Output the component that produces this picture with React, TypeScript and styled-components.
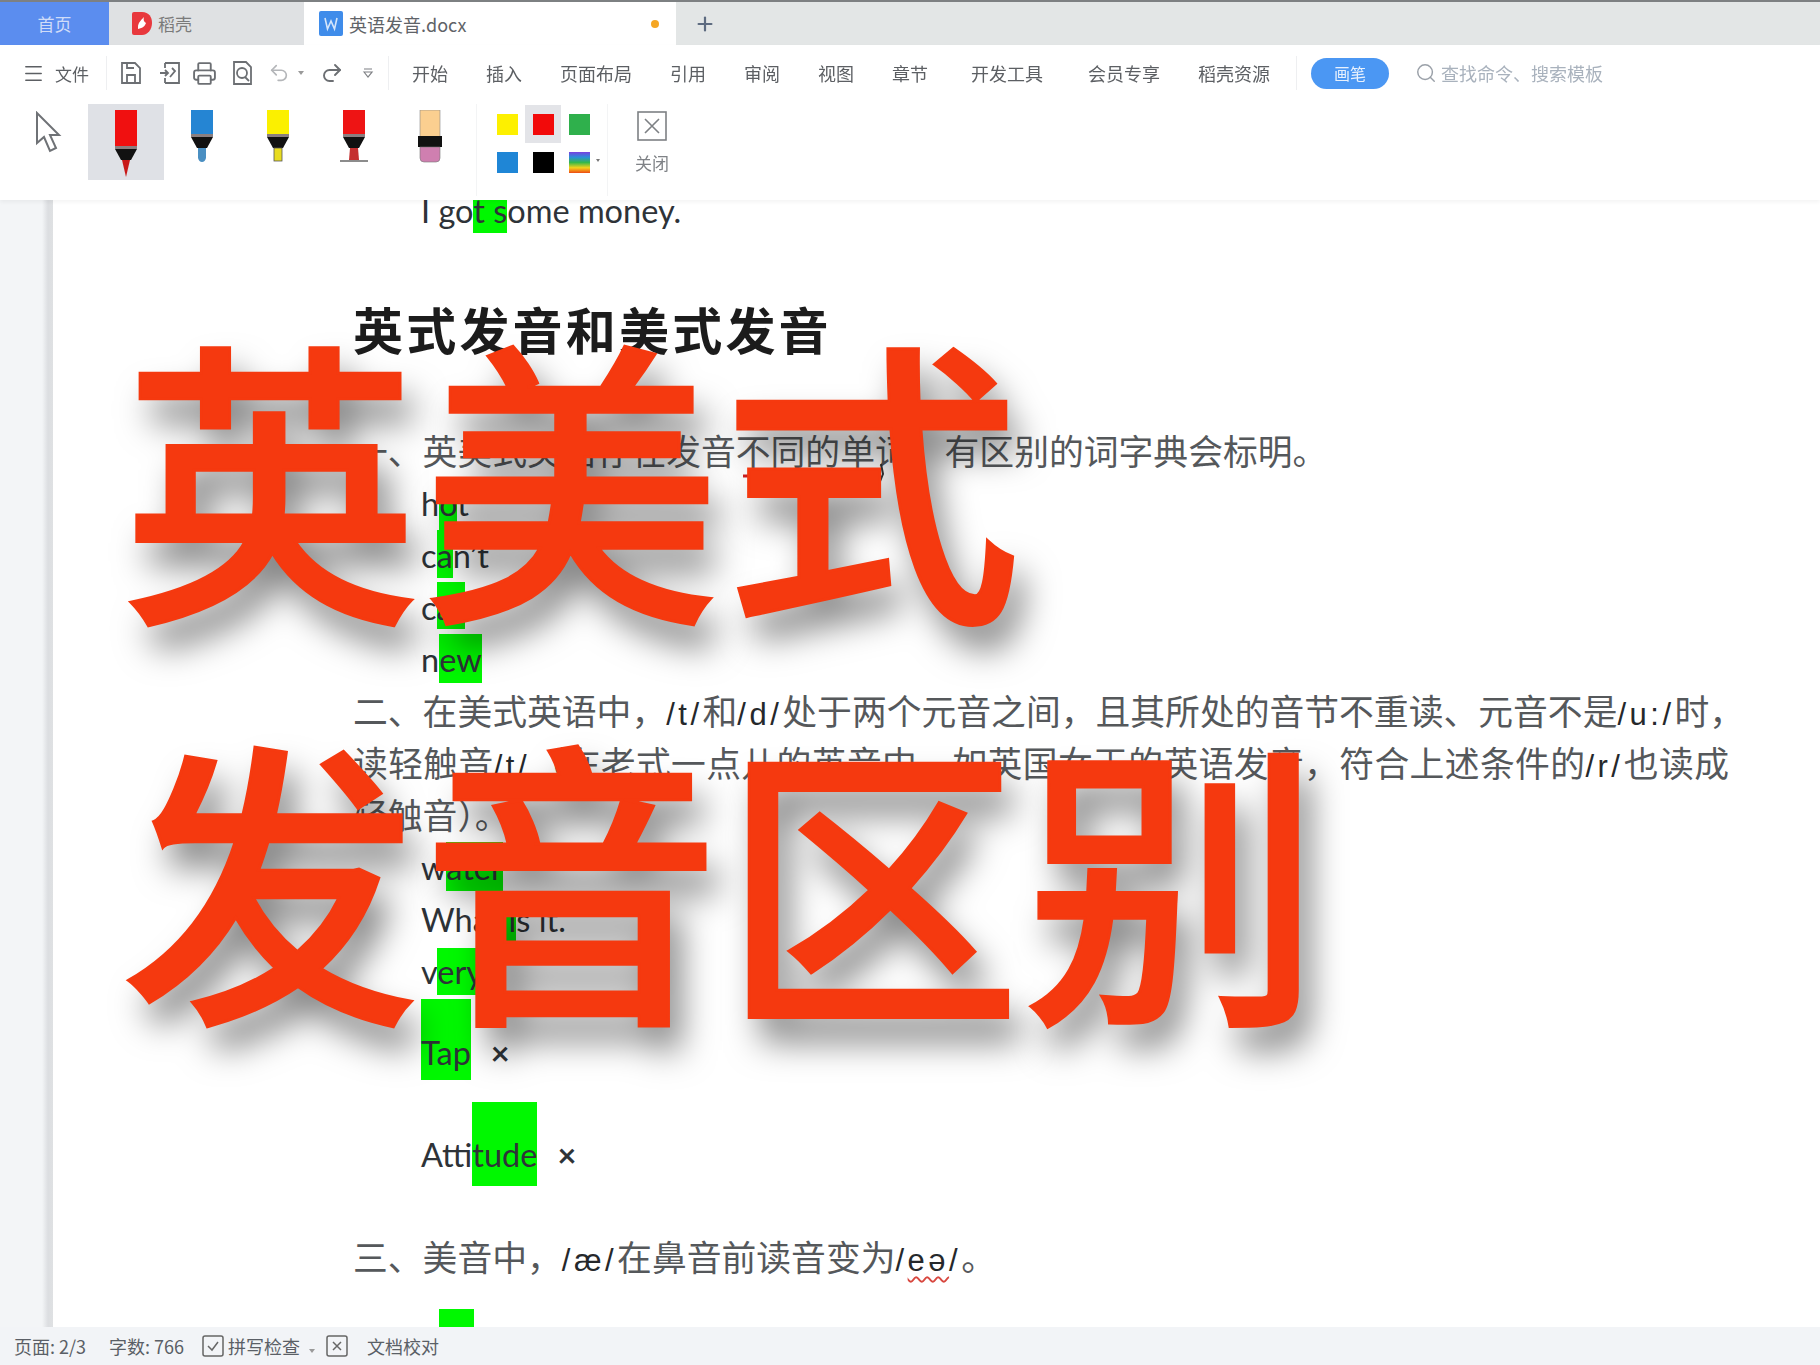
import { ReactNode } from "react";
import styled, { createGlobalStyle } from "styled-components";
import { Menu, Plus, Printer, Redo2, Search, Undo2 } from "lucide-react";

const CJK = `"Noto Sans CJK SC", "Liberation Sans", sans-serif`;
const GREEN = "#00f800";

const Global = createGlobalStyle`
    html, body {
        margin: 0;
        height: 100%;
        overflow: hidden;
        background: #fff;
    }
`;

const Window = styled.div`
    position: relative;
    width: 1820px;
    height: 1365px;
    display: grid;
    grid-template-rows: 45px 155px 1fr 38px;
    font-family: ${CJK};
    overflow: hidden;
    filter: blur(0.6px);
`;

/* tab strip */
const TabBar = styled.div`
    display: flex;
    align-items: stretch;
    background: #e3e6e6;
    border-top: 2px solid #7d8082;
`;

const HomeTab = styled.div`
    width: 109px;
    background: #5b8def;
    color: #cfdcf8;
    font-size: 17px;
    display: flex;
    align-items: center;
    justify-content: center;
`;

const ShellTab = styled.div`
    width: 195px;
    background: #dfe1e3;
    color: #7a7a7a;
    font-size: 17px;
    display: flex;
    align-items: center;
    gap: 4px;
    padding-left: 21px;
    box-sizing: border-box;
`;

const DocTab = styled.div`
    width: 372px;
    background: #fff;
    color: #5f6368;
    font-size: 18px;
    display: flex;
    align-items: center;
    gap: 6px;
    padding-left: 15px;
    box-sizing: border-box;
`;

const DocTabName = styled.span`
    flex: 1 1 auto;
`;

const Dot = styled.span`
    width: 8px;
    height: 8px;
    border-radius: 50%;
    background: #f5a623;
    margin-right: 17px;
`;

const AddTab = styled.div`
    margin-left: 18px;
    color: #5d6b80;
    display: flex;
    align-items: center;
`;

/* ribbon */
const Ribbon = styled.div`
    background: #fff;
    display: flex;
    flex-direction: column;
    box-shadow: 0 2px 4px rgba(0, 0, 0, 0.05);
    position: relative;
    z-index: 1;
`;

const MenuRow = styled.div`
    height: 56px;
    display: flex;
    align-items: center;
    color: #5c5f63;
    font-size: 18px;
    flex: 0 0 auto;
`;

const FileMenu = styled.div`
    display: flex;
    align-items: center;
    gap: 10px;
    padding-left: 22px;
    font-size: 17px;
    width: 84px;
`;

const Rule = styled.div<{ $left: number }>`
    width: 1px;
    height: 34px;
    background: #eeeff1;
    margin-left: ${(p) => p.$left}px;
`;

const IconSlot = styled.div<{ $w: number; $left?: number }>`
    width: ${(p) => p.$w}px;
    margin-left: ${(p) => p.$left ?? 0}px;
    display: flex;
    align-items: center;
    justify-content: center;
    color: #6c6f73;
`;

const Tabs = styled.div`
    display: flex;
    align-items: center;
    margin-left: 23px;
`;

const TabLabel = styled.div<{ $gap?: number }>`
    margin-left: ${(p) => p.$gap ?? 38}px;
    &:first-child {
        margin-left: 0;
    }
`;

const Pill = styled.div`
    width: 78px;
    height: 31px;
    margin-left: 14px;
    border-radius: 16px;
    background: #4b97f3;
    color: #e8f1fd;
    font-size: 16px;
    display: flex;
    align-items: center;
    justify-content: center;
`;

const SearchBox = styled.div`
    margin-left: 26px;
    display: flex;
    align-items: center;
    gap: 4px;
    color: #a9b2bd;
    font-size: 18px;
`;

const ToolRow = styled.div`
    display: flex;
    align-items: flex-start;
    padding-top: 3px;
`;

const CursorSlot = styled.div`
    width: 88px;
    padding: 7px 0 0 35px;
    box-sizing: border-box;
`;

const PenCell = styled.div<{ $active?: boolean }>`
    width: 76px;
    height: 76px;
    display: flex;
    justify-content: center;
    padding-top: 6px;
    box-sizing: border-box;
    background: ${(p) => (p.$active ? "#dfe1e6" : "transparent")};
`;

const Divider = styled.div<{ $left: number }>`
    width: 1px;
    height: 92px;
    background: #f3f4f5;
    margin-left: ${(p) => p.$left}px;
`;

const SwatchGrid = styled.div`
    display: grid;
    grid-template-columns: repeat(3, 36px);
    grid-auto-rows: 38px;
    margin: 1px 0 0 12px;
`;

const SwatchCell = styled.div<{ $active?: boolean }>`
    display: flex;
    align-items: center;
    justify-content: center;
    position: relative;
    background: ${(p) => (p.$active ? "#e3e4e8" : "transparent")};
`;

const Swatch = styled.div<{ $color: string }>`
    width: 21px;
    height: 21px;
    background: ${(p) => p.$color};
`;

const Caret = styled.span`
    position: absolute;
    right: -3px;
    top: 16px;
    width: 0;
    height: 0;
    border-left: 2.5px solid transparent;
    border-right: 2.5px solid transparent;
    border-top: 3px solid #777;
`;

const CloseTool = styled.div`
    margin-left: 28px;
    width: 32px;
    display: flex;
    flex-direction: column;
    align-items: center;
    gap: 9px;
    padding-top: 7px;
    color: #7f8286;
    font-size: 17px;
    white-space: nowrap;
`;

/* document */
const Viewport = styled.div`
    display: flex;
    overflow: hidden;
    background: #fff;
`;

const Gutter = styled.div`
    width: 53px;
    flex: 0 0 auto;
    background: linear-gradient(to right, #f3f5f7 0, #f3f5f7 42px, #dcdee1 48px, #dfe1e3 53px);
`;

const Page = styled.div`
    flex: 1 1 auto;
    background: #fff;
    padding-left: 300px;
    margin-top: -14px;
`;

const Line = styled.div<{ $gap?: number; $indent?: boolean }>`
    height: 52px;
    line-height: 52px;
    white-space: nowrap;
    margin-top: ${(p) => p.$gap ?? 0}px;
    padding-left: ${(p) => (p.$indent ? 68 : 0)}px;
`;

const Word = styled(Line)`
    font-family: Lato, "Liberation Sans", sans-serif;
    font-size: 32.5px;
    line-height: 49px;
    color: #2e3338;
`;

const Heading = styled.div`
    height: 70px;
    line-height: 70px;
    margin-top: 55px;
    font-size: 50px;
    font-weight: 700;
    color: #1c1c1c;
    letter-spacing: 3.2px;
    white-space: nowrap;
`;

const Body = styled(Line)<{ $fill?: boolean }>`
    font-family: "Liberation Sans", ${CJK};
    font-size: 34.8px;
    color: #55585b;
    width: ${(p) => (p.$fill ? "1376px" : "auto")};
    text-align-last: ${(p) => (p.$fill ? "justify" : "auto")};
`;

const Latin = styled.span`
    color: #25282b;
    font-size: 31px;
    letter-spacing: 3.5px;
`;

const Spelled = styled.span`
    text-decoration: underline wavy #d8473f 1.5px;
    text-underline-offset: 5px;
`;

const Mark = styled.span<{ $top: number; $bottom: number }>`
    background: ${GREEN};
    padding: ${(p) => p.$top}px 0 ${(p) => p.$bottom}px;
`;

const Cross = styled.span`
    margin-left: 20px;
    font-weight: 700;
`;

const Stub = styled.div`
    width: 35px;
    height: 30px;
    margin: 24px 0 0 86px;
    background: ${GREEN};
`;

/* status bar */
const StatusBar = styled.div`
    background: #f2f4f7;
    position: relative;
    z-index: 1;
    display: flex;
    align-items: center;
    padding-left: 14px;
    font-size: 18px;
    color: #5a5f66;
`;

const StatusText = styled.span<{ $gap?: number }>`
    margin-left: ${(p) => p.$gap ?? 0}px;
`;

/* big title lying over the page */
const Title = styled.div`
    position: absolute;
    left: 121px;
    top: 269px;
    color: #f5390f;
    -webkit-text-stroke: 3px #f5390f;
    font-size: 299px;
    font-weight: 500;
    line-height: 401px;
    letter-spacing: 1.5px;
    white-space: nowrap;
    text-shadow: 12px 24px 34px rgba(0, 0, 0, 0.5);
    pointer-events: none;
`;

const Stroke = styled.svg`
    position: absolute;
    left: 735px;
    top: 450px;
`;

function Pen({ body, tip, kind }: { body: string; tip: string; kind: "fine" | "round" | "flat" | "line" | "eraser" }) {
    if (kind === "eraser") {
        return (
            <svg width="26" height="54" viewBox="0 0 26 54">
                <rect x="3" y="0" width="20" height="28" fill={body} stroke="#888" strokeWidth="0.6" />
                <rect x="1" y="26" width="24" height="11" fill="#111" />
                <path d="M3 37h20v11q0 4-4 4h-12q-4 0-4-4z" fill="#cf7fb0" stroke="#777" strokeWidth="0.6" />
            </svg>
        );
    }
    const tall = kind === "fine";
    return (
        <svg width="28" height={tall ? 68 : 54} viewBox={`0 0 28 ${tall ? 68 : 54}`}>
            <rect x="3" y="0" width="22" height={tall ? 38 : 26} fill={body} />
            <rect x="3" y={tall ? 36 : 24} width="22" height="3" fill="#8a7f80" />
            <path d={`M3 ${tall ? 39 : 27}h22l-6 11h-10z`} fill="#111" />
            {kind === "fine" && <path d="M10 50h8l-4 17z" fill={tip} />}
            {kind === "round" && <path d="M10 38h8v10q-1 4-4 4t-4-4z" fill={tip} />}
            {kind === "flat" && <rect x="10" y="38" width="8" height="13" fill={tip} stroke="#555" strokeWidth="0.8" />}
            {kind === "line" && (
                <>
                    <path d="M10 38h8l1 12h-10z" fill={tip} />
                    <rect x="0" y="50" width="28" height="2" fill="#8c8c8c" />
                </>
            )}
        </svg>
    );
}

function SmallCaret() {
    return (
        <svg width="8" height="6" viewBox="0 0 8 6">
            <path d="M1 1l3 4 3-4z" fill="#9a9a9a" />
        </svg>
    );
}

function OutlineIcon({ children }: { children: ReactNode }) {
    return (
        <svg width="24" height="26" viewBox="0 0 24 26" fill="none" stroke="#6c6f73" strokeWidth="1.8">
            {children}
        </svg>
    );
}

export default function App() {
    return (
        <Window>
            <Global />
            <TabBar>
                <HomeTab>首页</HomeTab>
                <ShellTab>
                    <svg width="24" height="25" viewBox="0 0 24 25">
                        <path d="M2 3q0-2 2-2h8c7 0 10 5 10 11s-4 12-10 12h-8q-2 0-2-2z" fill="#e8383d" />
                        <path d="M8 16c0-4 3-7 6-10-1 3 0 5 2 6-1 3-3 5-8 6z" fill="#fff" />
                    </svg>
                    稻壳
                </ShellTab>
                <DocTab>
                    <svg width="24" height="25" viewBox="0 0 24 25">
                        <rect width="24" height="25" rx="2" fill="#3f8cea" />
                        <path d="M6 7l2.5 11 3.5-8 3.5 8 2.5-11" fill="none" stroke="#d5e6fb" strokeWidth="1.6" />
                    </svg>
                    <DocTabName>英语发音.docx</DocTabName>
                    <Dot />
                </DocTab>
                <AddTab>
                    <Plus size={22} strokeWidth={2.4} />
                </AddTab>
            </TabBar>

            <Ribbon>
                <MenuRow>
                    <FileMenu>
                        <Menu size={23} strokeWidth={1.6} />
                        文件
                    </FileMenu>
                    <Rule $left={0} />
                    <IconSlot $w={48}>
                        <OutlineIcon>
                            <path d="M3 3h13l5 5v15h-18z" />
                            <path d="M8 23v-8h8v8M8 3v5h7" />
                        </OutlineIcon>
                    </IconSlot>
                    <IconSlot $w={30}>
                        <OutlineIcon>
                            <path d="M7 3h14v20h-14M7 3v5M7 18v5" />
                            <path d="M2 13h8M7 10l3 3-3 3M14 8l3 3-5 6" />
                        </OutlineIcon>
                    </IconSlot>
                    <IconSlot $w={38}>
                        <Printer size={25} strokeWidth={1.8} />
                    </IconSlot>
                    <IconSlot $w={38}>
                        <OutlineIcon>
                            <path d="M4 2h12l5 5v17h-17z" />
                            <circle cx="12" cy="13" r="5" />
                            <path d="M15 17l4 4" />
                        </OutlineIcon>
                    </IconSlot>
                    <IconSlot $w={36}>
                        <Undo2 size={22} strokeWidth={1.8} color="#b4b6b9" />
                    </IconSlot>
                    <SmallCaret />
                    <IconSlot $w={54}>
                        <Redo2 size={24} strokeWidth={1.9} />
                    </IconSlot>
                    <IconSlot $w={18}>
                        <svg width="12" height="12" viewBox="0 0 12 12" fill="none" stroke="#7d7f83" strokeWidth="1.2">
                            <path d="M2 2h8M2 5l4 5 4-5z" />
                        </svg>
                    </IconSlot>
                    <Rule $left={11} />
                    <Tabs>
                        <TabLabel>开始</TabLabel>
                        <TabLabel>插入</TabLabel>
                        <TabLabel>页面布局</TabLabel>
                        <TabLabel>引用</TabLabel>
                        <TabLabel>审阅</TabLabel>
                        <TabLabel>视图</TabLabel>
                        <TabLabel>章节</TabLabel>
                        <TabLabel $gap={43}>开发工具</TabLabel>
                        <TabLabel $gap={45}>会员专享</TabLabel>
                        <TabLabel>稻壳资源</TabLabel>
                    </Tabs>
                    <Rule $left={26} />
                    <Pill>画笔</Pill>
                    <SearchBox>
                        <Search size={22} strokeWidth={1.6} color="#9aa0a8" />
                        查找命令、搜索模板
                    </SearchBox>
                </MenuRow>
                <ToolRow>
                    <CursorSlot>
                        <svg width="27" height="42" viewBox="0 0 27 42" fill="#fff" stroke="#6f7276" strokeWidth="2">
                            <path d="M2 2v30l7-6 6 14 6-3-6-13h9z" />
                        </svg>
                    </CursorSlot>
                    <PenCell $active>
                        <Pen kind="fine" body="#f01010" tip="#c81818" />
                    </PenCell>
                    <PenCell>
                        <Pen kind="round" body="#2585d3" tip="#4a8fc2" />
                    </PenCell>
                    <PenCell>
                        <Pen kind="flat" body="#fbf000" tip="#e8dc20" />
                    </PenCell>
                    <PenCell>
                        <Pen kind="line" body="#ee1414" tip="#c43030" />
                    </PenCell>
                    <PenCell>
                        <Pen kind="eraser" body="#fbcf90" tip="#cf7fb0" />
                    </PenCell>
                    <Divider $left={8} />
                    <SwatchGrid>
                        <SwatchCell>
                            <Swatch $color="#fdf000" />
                        </SwatchCell>
                        <SwatchCell $active>
                            <Swatch $color="#f20a0a" />
                        </SwatchCell>
                        <SwatchCell>
                            <Swatch $color="#2fb04c" />
                        </SwatchCell>
                        <SwatchCell>
                            <Swatch $color="#1f86d6" />
                        </SwatchCell>
                        <SwatchCell>
                            <Swatch $color="#000" />
                        </SwatchCell>
                        <SwatchCell>
                            <Swatch $color="linear-gradient(#7a3fe0, #2b8fd8, #35b84a, #f6d21a, #ee4a14)" />
                            <Caret />
                        </SwatchCell>
                    </SwatchGrid>
                    <Divider $left={10} />
                    <CloseTool>
                        <svg width="30" height="30" viewBox="0 0 30 30" fill="none" stroke="#7d8084" strokeWidth="1.6">
                            <rect x="1" y="1" width="28" height="28" />
                            <path d="M8 8l14 14M22 8l-14 14" />
                        </svg>
                        关闭
                    </CloseTool>
                </ToolRow>
            </Ribbon>

            <Viewport>
                <Gutter />
                <Page>
                    <Word $indent>
                        I go<Mark $top={10} $bottom={3}>t s</Mark>ome money.
                    </Word>
                    <Heading>英式发音和美式发音</Heading>
                    <Body $gap={64}>一、英美式英语存在发音不同的单词，有区别的词字典会标明。</Body>
                    <Word $indent>
                        h<Mark $top={6} $bottom={8}>o</Mark>t
                    </Word>
                    <Word $indent>
                        c<Mark $top={6} $bottom={3}>a</Mark>n’t
                    </Word>
                    <Word $indent>
                        c<Mark $top={6} $bottom={2}>ar</Mark>
                    </Word>
                    <Word $indent>
                        n<Mark $top={6} $bottom={4}>ew</Mark>
                    </Word>
                    <Body $fill>
                        二、在美式英语中，<Latin>/t/</Latin>和<Latin>/d/</Latin>处于两个元音之间，且其所处的音节不重读、元音不是<Latin>/u:/</Latin>时，
                    </Body>
                    <Body $fill>
                        读轻触音<Latin>/t/</Latin>（在老式一点儿的英音中，如英国女王的英语发音，符合上述条件的<Latin>/r/</Latin>也读成
                    </Body>
                    <Body>轻触音）。</Body>
                    <Word $indent>
                        w<Mark $top={6} $bottom={4}>ater</Mark>
                    </Word>
                    <Word $indent>
                        What<Mark $top={0} $bottom={4}> i</Mark>s it.
                    </Word>
                    <Word $indent>
                        v<Mark $top={4} $bottom={4}>ery</Mark>
                    </Word>
                    <Word $indent $gap={29}>
                        <Mark $top={34} $bottom={8}>Tap</Mark>
                        <Cross>×</Cross>
                    </Word>
                    <Word $indent $gap={50}>
                        Atti<Mark $top={33} $bottom={12}>tude</Mark>
                        <Cross>×</Cross>
                    </Word>
                    <Body $gap={51}>
                        三、美音中，<Latin>/æ/</Latin>在鼻音前读音变为<Latin>/<Spelled>eə</Spelled>/</Latin>。
                    </Body>
                    <Stub />
                </Page>
            </Viewport>

            <StatusBar>
                <StatusText>页面: 2/3</StatusText>
                <StatusText $gap={23}>字数: 766</StatusText>
                <IconSlot $w={30} $left={14}>
                    <svg width="22" height="22" viewBox="0 0 22 22" fill="none" stroke="#666" strokeWidth="1.5">
                        <rect x="1" y="1" width="20" height="20" rx="2" />
                        <path d="M6 11l4 4 6-8" />
                    </svg>
                </IconSlot>
                <StatusText>拼写检查</StatusText>
                <StatusText $gap={8}>
                    <SmallCaret />
                </StatusText>
                <IconSlot $w={42}>
                    <svg width="22" height="22" viewBox="0 0 22 22" fill="none" stroke="#666" strokeWidth="1.5">
                        <rect x="1" y="1" width="20" height="20" rx="2" />
                        <path d="M7 7l8 8M15 7l-8 8" />
                    </svg>
                </IconSlot>
                <StatusText $gap={9}>文档校对</StatusText>
            </StatusBar>

            <Stroke width="160" height="40" viewBox="0 0 160 40" fill="none">
                <path d="M8 26h16" stroke="#d02020" strokeWidth="3" />
                <path d="M24 26h122" stroke="#333" strokeWidth="2" />
                <path d="M146 14l2 10-4 10" stroke="#333" strokeWidth="2" />
            </Stroke>
            <Title>
                英美式
                <br />
                发音区别
            </Title>
        </Window>
    );
}
